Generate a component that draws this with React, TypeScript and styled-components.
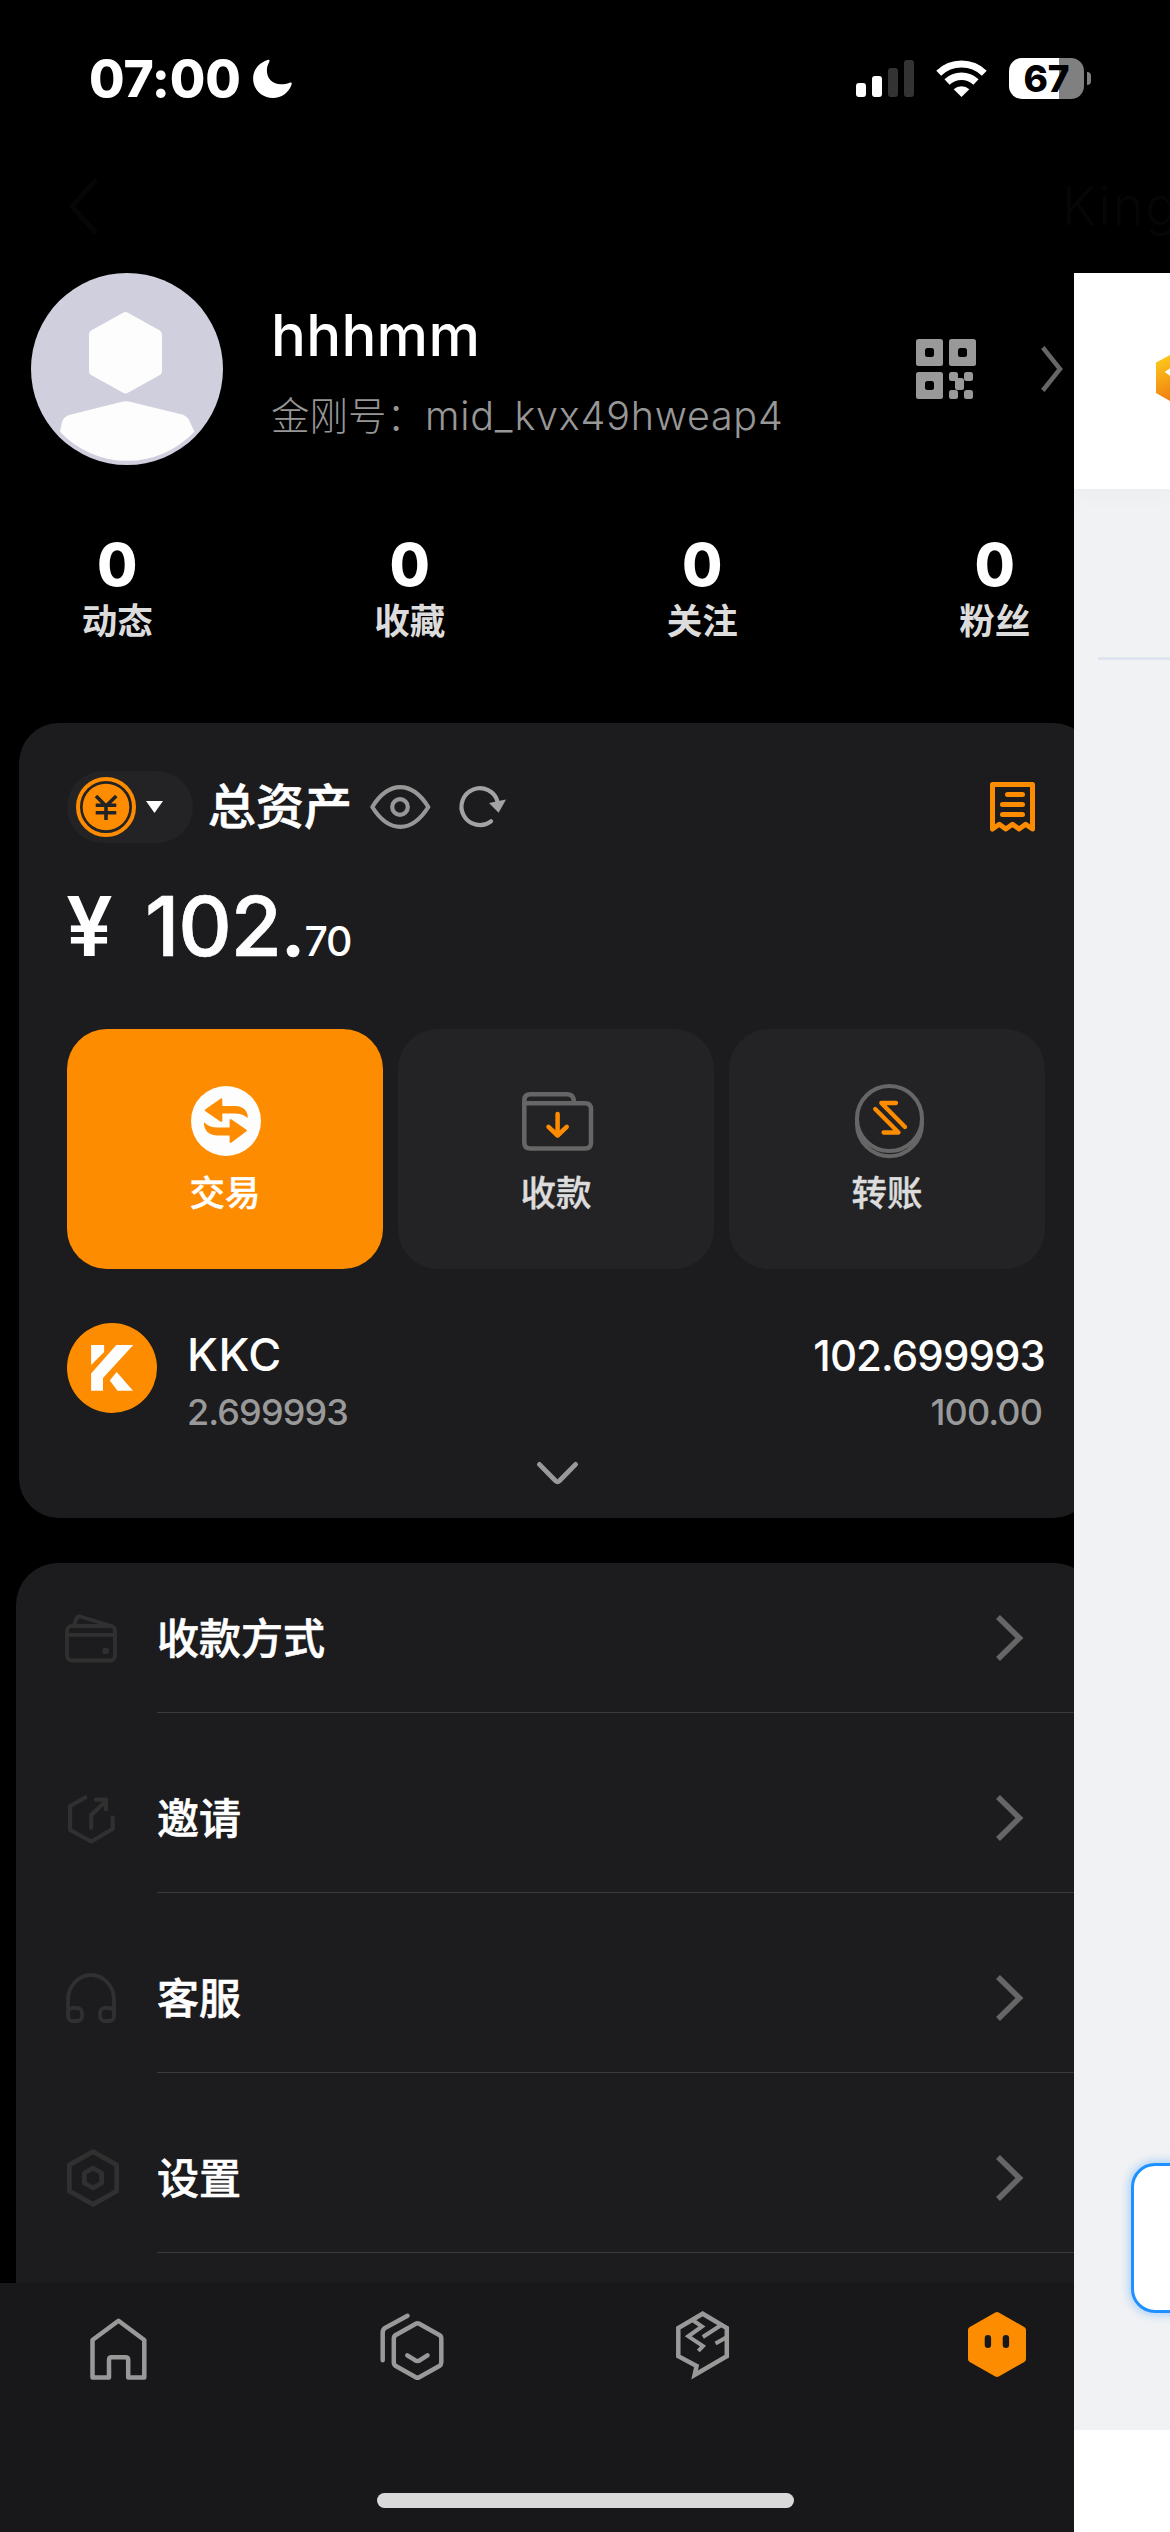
import React from "react";
import styled, { createGlobalStyle } from "styled-components";

const SANS = `Inter, "Noto Sans CJK SC", sans-serif`;
const ORANGE = "#fe8c00";
const GREY = "#999999";
const DIM = "#666666";
const FAINT = "#303031";

const Global = createGlobalStyle`
  * { box-sizing: border-box; }
  body { margin: 0; background: #000; font-family: ${SANS}; }
  svg { display: block; flex: none; overflow: visible; }
`;

const Phone = styled.div`
  position: relative;
  width: 1170px;
  height: 2532px;
  overflow: hidden;
  display: flex;
  flex-direction: column;
  background: #000;
  color: #fff;
`;

/* ---------- status bar ---------- */

const StatusBar = styled.header`
  height: 156px;
  flex: none;
  display: flex;
  align-items: center;
  padding: 0 79px 0 89px;
`;

const Clock = styled.span`
  font-size: 51.5px;
  line-height: 60px;
  font-weight: 800;
  width: 164px;
  letter-spacing: -0.2px;
`;

const StatusIcons = styled.div`
  margin-left: auto;
  display: flex;
  align-items: center;
`;

const Battery = styled.div`
  width: 75px;
  height: 41px;
  margin-left: 22px;
  border-radius: 13px;
  background: linear-gradient(90deg, #fff 50px, #808080 50px);
  color: #000;
  font-size: 37px;
  line-height: 41px;
  font-weight: 800;
  text-align: center;
`;

const BatteryCap = styled.div`
  width: 4px;
  height: 13px;
  margin-left: 3px;
  border-radius: 0 4px 4px 0;
  background: #808080;
`;

const GhostNav = styled.nav`
  height: 117px;
  flex: none;
  display: flex;
  align-items: center;
  justify-content: space-between;
  padding: 0 0 17px 69px;
`;

const GhostTitle = styled.span`
  width: 108px;
  font-size: 53px;
  line-height: 64px;
  font-weight: 300;
  letter-spacing: 1.5px;
  color: #060606;
  white-space: nowrap;
`;

/* ---------- layout ---------- */

const Body = styled.div`
  flex: 1;
  min-height: 0;
  display: flex;
`;

const Viewport = styled.main`
  width: 1074px;
  flex: none;
  overflow: hidden;
`;

const Page = styled.div`
  width: 1170px;
  height: 100%;
  margin-left: -29px;
  display: flex;
  flex-direction: column;
`;

const Profile = styled.section`
  height: 192px;
  flex: none;
  display: flex;
  align-items: center;
  padding: 0 78px 0 60px;
`;

const ProfileText = styled.div`
  margin-left: 48px;
  padding-top: 2px;
  flex: 1;
  display: flex;
  flex-direction: column;
  gap: 21px;
`;

const Name = styled.span`
  font-size: 58px;
  line-height: 70px;
  font-weight: 500;
  letter-spacing: 0.3px;
`;

const UserId = styled.span`
  font-size: 38.5px;
  line-height: 50px;
  font-weight: 300;
  color: #979797;
  white-space: nowrap;
`;

const Handle = styled.span`
  font-size: 39.5px;
  line-height: 40px;
  letter-spacing: 0.75px;
`;

const ProfileActions = styled.div`
  display: flex;
  align-items: center;
  gap: 65px;
`;

const Stats = styled.section`
  flex: none;
  display: grid;
  grid-template-columns: repeat(4, 1fr);
  margin-top: 70px;
`;

const Stat = styled.div`
  display: flex;
  flex-direction: column;
  align-items: center;
  gap: 7px;
`;

const StatValue = styled.span`
  font-size: 58.5px;
  line-height: 60px;
  font-weight: 800;
`;

const StatLabel = styled.span`
  font-size: 35.5px;
  line-height: 40px;
  font-weight: 700;
  color: #dcdcdc;
`;

/* ---------- assets card ---------- */

const Card = styled.section`
  flex: none;
  height: 795px;
  margin: 81px 48px 0;
  padding: 48px;
  border-radius: 40px;
  background: #1c1c1e;
`;

const CardHeader = styled.div`
  height: 72px;
  display: flex;
  align-items: center;
`;

const Currency = styled.button`
  width: 126px;
  height: 72px;
  padding: 0 0 0 9px;
  border: 0;
  border-radius: 36px;
  background: #232325;
  display: flex;
  align-items: center;
  gap: 10px;
`;

const CardTitle = styled.h2`
  width: 146px;
  margin: 0 16px 0 15px;
  font-size: 48px;
  line-height: 60px;
  font-weight: 500;
  white-space: nowrap;
  -webkit-text-stroke: 0.7px currentColor;
`;

const HeaderIcons = styled.div`
  flex: 1;
  display: flex;
  align-items: center;
  gap: 28px;
  padding-right: 10px;

  svg:last-child {
    margin-left: auto;
  }
`;

const Amount = styled.div`
  margin-top: 38px;
  height: 90px;
  display: flex;
  align-items: baseline;
  font-size: 83px;
  line-height: 90px;
  font-weight: 500;
  white-space: nowrap;
`;

const Yen = styled.span`
  width: 79px;
  margin-left: -1px;
  line-height: 80px;
  font-weight: 600;
`;

const Whole = styled.span`
  letter-spacing: -1.2px;
  -webkit-text-stroke: 0.7px currentColor;
`;

const Cents = styled.span`
  font-size: 41px;
  line-height: 50px;
  letter-spacing: -1.3px;
`;

const Actions = styled.div`
  margin-top: 58px;
  display: grid;
  grid-template-columns: repeat(3, 1fr);
  gap: 15px;
`;

const Action = styled.button<{ $primary?: boolean }>`
  height: 240px;
  padding: 0;
  border: 0;
  border-radius: 40px;
  background: ${(p) => (p.$primary ? ORANGE : "#232325")};
  color: ${(p) => (p.$primary ? "#fff" : "#dcdcdc")};
  font-family: inherit;
  font-size: 35.5px;
  line-height: 40px;
  font-weight: 500;
  -webkit-text-stroke: 0.4px currentColor;
  display: flex;
  flex-direction: column;
  align-items: center;
  justify-content: center;
  gap: 16px;
`;

const ActionIcon = styled.span<{ $nudge: number }>`
  height: 74px;
  display: flex;
  align-items: center;
  padding-left: ${(p) => p.$nudge}px;
`;

const Asset = styled.div`
  margin-top: 54px;
  height: 108px;
  display: flex;
  align-items: flex-start;
`;

const AssetText = styled.div<{ $end?: boolean }>`
  padding-top: 7px;
  margin-left: ${(p) => (p.$end ? "auto" : "30px")};
  display: flex;
  flex-direction: column;
  align-items: ${(p) => (p.$end ? "flex-end" : "flex-start")};
  gap: 14px;
`;

const Ticker = styled.span`
  font-size: 45px;
  line-height: 50px;
  font-weight: 500;
  letter-spacing: 0.5px;
`;

const Total = styled.span`
  font-size: 42px;
  line-height: 52px;
  margin-bottom: -2px;
  font-weight: 500;
  letter-spacing: -0.9px;
`;

const AssetSub = styled.span<{ $inset?: boolean }>`
  font-size: 36px;
  line-height: 36px;
  font-weight: 500;
  letter-spacing: -0.9px;
  color: ${GREY};
  padding-right: ${(p) => (p.$inset ? "3px" : "0")};
`;

const Expand = styled.div`
  margin-top: 31px;
  padding-left: 2px;
  display: flex;
  justify-content: center;
`;

/* ---------- menu ---------- */

const Menu = styled.section`
  flex: 1;
  min-height: 0;
  overflow: hidden;
  margin: 45px 45px 0;
  border-radius: 42px 42px 0 0;
  background: #1c1c1e;
  display: flex;
  flex-direction: column;
  gap: 30px;
`;

const MenuRow = styled.div`
  height: 150px;
  flex: none;
  display: flex;
`;

const MenuIcon = styled.span<{ $inset: number; $drop: number }>`
  width: 141px;
  display: flex;
  align-items: center;
  padding: ${(p) => p.$drop}px 0 0 ${(p) => p.$inset}px;
`;

const MenuMain = styled.div`
  flex: 1;
  display: flex;
  align-items: center;
  justify-content: space-between;
  padding: 0 72px 0 0;
  border-bottom: 1px solid #3a3a3c;
`;

const MenuLabel = styled.span`
  padding-top: 3px;
  font-size: 42px;
  line-height: 50px;
  font-weight: 500;
  -webkit-text-stroke: 0.6px currentColor;
`;

/* ---------- tab bar ---------- */

const TabBar = styled.nav`
  height: 249px;
  flex: none;
  display: grid;
  grid-template-columns: repeat(4, 1fr);
  align-items: start;
  background: #18181a;
`;

const Tab = styled.div<{ $shift: number; $top: number }>`
  display: flex;
  justify-content: center;
  padding: ${(p) => p.$top}px 0 0 ${(p) => p.$shift}px;
`;

const HomeIndicator = styled.div`
  position: absolute;
  left: 377px;
  top: 2493px;
  width: 417px;
  height: 15px;
  border-radius: 8px;
  background: #d9d9d9;
`;

/* ---------- incoming screen ---------- */

const Side = styled.aside`
  flex: 1;
  min-width: 0;
  overflow: hidden;
  display: flex;
  flex-direction: column;
  background: #fff;
`;

const SideHeader = styled.div`
  position: relative;
  height: 216px;
  flex: none;
  padding: 82px 0 0 82px;
  background: #fff;
  box-shadow: 0 4px 24px rgba(0, 0, 0, 0.03);
`;

const SideBody = styled.div`
  height: 1941px;
  flex: none;
  padding-top: 168px;
  background: #f1f2f4;
`;

const SideRule = styled.div`
  height: 3px;
  margin-left: 24px;
  background: #dfe5ef;
`;

const SideInput = styled.div`
  width: 300px;
  height: 150px;
  margin: 1503px 0 0 57px;
  border: 3px solid #1e90ff;
  border-radius: 24px;
  background: #fff;
  box-shadow: 0 0 10px 2px rgba(30, 144, 255, 0.35);
`;

/* ---------- icons ---------- */

type IconProps = {
  w: number;
  h: number;
  color?: string;
  sw?: number;
  children: React.ReactNode;
};

const Icon = ({ w, h, color = GREY, sw = 4.5, children }: IconProps) => (
  <svg
    width={w}
    height={h}
    viewBox={`0 0 ${w} ${h}`}
    fill="none"
    stroke={color}
    strokeWidth={sw}
    strokeLinecap="round"
    strokeLinejoin="round"
  >
    {children}
  </svg>
);

const WifiSvg = styled.svg`
  margin-left: 22px;
`;

const MoonIcon = () => (
  <svg width="39" height="39" viewBox="0 0 39 39" fill="#fff">
    <path d="M14.500.9C16.300.2 17 1.300 16.200 3 14.500 6 13.900 8.500 13.900 11.500c0 8.300 5.800 13.800 14.100 13.800 3 0 6-.5 8.500-1.500 1.800-.7 2.700.4 2 2C35.500 34 28.500 39 20 39 8.800 39 .1 30.500.1 19.500.1 11 5.500 4 14.500.9Z" />
  </svg>
);

const SignalIcon = () => (
  <svg width="58" height="37" viewBox="0 0 58 37">
    <rect x="0" y="23" width="10" height="14" rx="3" fill="#fff" />
    <rect x="16" y="16" width="10" height="21" rx="3" fill="#fff" />
    <rect x="32" y="8" width="10" height="29" rx="3" fill="#333" />
    <rect x="48" y="0" width="10" height="37" rx="3" fill="#333" />
  </svg>
);

const WifiIcon = () => (
  <WifiSvg width="51" height="37" viewBox="0 0 51 37" fill="none" stroke="#fff">
    <path d="M2.700 13.200A33 33 0 0 1 48.300 13.200" strokeWidth="7" />
    <path d="M11 22A21.200 21.200 0 0 1 40 22" strokeWidth="7.500" />
    <path d="M25.500 37 17.700 29.300A11.500 11.500 0 0 1 33.300 29.300Z" fill="#fff" stroke="none" />
  </WifiSvg>
);

const AvatarIcon = () => (
  <svg width="192" height="192" viewBox="0 0 192 192">
    <circle cx="96" cy="96" r="96" fill="#d0cfdd" />
    <path
      d="M94.500 44 126 61.500V98L94.500 115.500 63 98V61.500Z"
      fill="#fdfdfd"
      stroke="#fdfdfd"
      strokeWidth="10"
      strokeLinejoin="round"
    />
    <path
      d="M90 129Q95 127.500 100 129L151 141.500Q156.500 143 158.500 148L163.400 158.700A92 92 0 0 1 29 158.700L31 149Q32.500 144 38 142Z"
      fill="#fdfdfd"
    />
  </svg>
);

const QrIcon = () => (
  <svg width="60" height="60" viewBox="0 0 60 60" fill={GREY}>
    {[[0, 0], [33, 0], [0, 33]].map(([x, y]) => (
      <g key={`${x}-${y}`}>
        <rect x={x} y={y} width="27" height="27" rx="2.500" />
        <rect x={x + 9} y={y + 9} width="9" height="9" rx="2.500" fill="#000" />
      </g>
    ))}
    <rect x="33" y="33" width="9" height="9" rx="2.500" />
    <rect x="48" y="33" width="9" height="9" rx="2.500" />
    <rect x="39" y="39" width="9" height="12" rx="2.500" />
    <rect x="33" y="51" width="9" height="9" rx="2.500" />
    <rect x="48" y="51" width="9" height="9" rx="2.500" />
  </svg>
);

const ThinChevron = () => (
  <svg width="22" height="46" viewBox="0 0 22 46" fill="none" stroke={DIM} strokeWidth="4.500">
    <path d="M1.800 1.500 19 23 1.800 44.500" />
  </svg>
);

const MenuChevron = () => (
  <svg width="28" height="46" viewBox="0 0 28 46" fill="none" stroke={DIM} strokeWidth="5.600">
    <path d="M2 2 23.400 23 2 44" />
  </svg>
);

const CoinIcon = () => (
  <svg width="60" height="60" viewBox="0 0 60 60" fill="none">
    <circle cx="30" cy="30" r="28" stroke={ORANGE} strokeWidth="4" />
    <circle cx="30" cy="30" r="23.300" fill={ORANGE} />
    <path d="M20 19 30 29 40.300 19M19.700 28.300H40.300M19.700 35.800H40.300M30 28.300V43" stroke="#232325" strokeWidth="3.600" />
  </svg>
);

const CaretIcon = () => (
  <svg width="17" height="12" viewBox="0 0 17 12" fill="#fff">
    <path d="M0 0H17L8.500 12Z" />
  </svg>
);

const EyeIcon = () => (
  <Icon w={61} h={44} color="#979797" sw={4.2}>
    <path d="M2.300 22C11 8 20.500 2.200 30.300 2.200S49.500 8 58.300 22C49.500 36 40 41.800 30.300 41.800S11 36 2.300 22Z" />
    <circle cx="30" cy="22" r="7.800" />
  </Icon>
);

const RefreshIcon = () => (
  <Icon w={47} h={42} color="#a3a3a3" sw={4.2}>
    <path d="M38.700 16A18.400 18.400 0 1 0 32 35.300" />
    <path d="M30 17 47 13.500 39.600 26.700Z" fill="#a3a3a3" stroke="none" />
  </Icon>
);

const ReceiptIcon = () => (
  <Icon w={45} h={50} color={ORANGE} sw={5}>
    <path d="M2.500 2.500H42.500V47L35.600 42.300 29.100 47 22.500 42.300 15.800 47 9.300 42.300 2.500 47Z" />
    <path d="M17.500 12.500H32.500M12.500 22.500H32.500M12.500 32.500H32.500" />
  </Icon>
);

const TradeIcon = () => (
  <svg width="70" height="70" viewBox="0 0 70 70">
    <circle cx="35" cy="35" r="35" fill="#fdfdfd" />
    <path
      d="M14.100 23.500 29.500 12.800Q31.300 11.500 31.300 14V20H44Q56.500 20.500 56.900 32 51 27.600 44 27.600H31.300V34Q31.300 36.700 29.300 35.600L14.100 25Q13.400 24.300 14.100 23.500Z"
      fill={ORANGE}
    />
    <path
      d="M55.500 45.200 40.500 56.600Q38.600 57.600 38.600 55.500V49.400H25.500Q13 48.500 12.900 36.300 18.500 41.500 26.500 41.500H38.600V35Q38.600 32.300 40.600 33.400L55.500 43.800Q56.300 44.500 55.500 45.200Z"
      fill={ORANGE}
    />
  </svg>
);

const ReceiveIcon = () => (
  <Icon w={71} h={59} color={DIM}>
    <path d="M2.300 11.500V8.500Q2.300 2.300 8.500 2.300H45.500Q52 2.500 52 10.500" />
    <path d="M2.300 11.300H63Q69 11.300 69 17.300V50.500Q69 56.500 63 56.500H8.300Q2.300 56.500 2.300 50.500Z" />
    <path d="M35.600 22V43.500M26.500 34.800 35.600 43.500 44.700 34.800" stroke={ORANGE} />
  </Icon>
);

const TransferIcon = () => (
  <Icon w={69} h={73} color={DIM} sw={4}>
    <circle cx="34.500" cy="33.500" r="32.500" />
    <path d="M2 34V38.700A32.500 32.500 0 0 0 67 38.700V34" />
    <path d="M41 18H26.300L50 42M20.200 24 43.500 47.500H28.600" stroke={ORANGE} strokeWidth="4.300" />
  </Icon>
);

const LogoIcon = () => (
  <svg width="90" height="90" viewBox="0 0 90 90">
    <circle cx="45" cy="45" r="45" fill={ORANGE} />
    <g fill="#fdfdfd">
      <path d="M24.100 22H37.100V29L24.100 42Z" />
      <path d="M49.300 22H66.300L36 55.100V67.800H24.100V50.600Z" />
      <path d="M49.700 48.900 66 67.800H50.500L42.800 57.500Z" />
    </g>
  </svg>
);

const DownIcon = () => (
  <Icon w={41} h={23} color={GREY} sw={4.8}>
    <path d="M2.400 2.400 18.500 18.800Q20.500 20.600 22.500 18.800L38.600 2.400" />
  </Icon>
);

const WalletIcon = () => (
  <Icon w={52} h={49} color={FAINT} sw={3.8}>
    <rect x="2" y="12" width="48" height="34.500" rx="5" />
    <path d="M2 20.800H50M9 11.500 11 5.500Q12.500 1.500 16 2.800L46.500 12" />
    <circle cx="40.700" cy="37" r="3.300" fill={FAINT} stroke="none" />
  </Icon>
);

const InviteIcon = () => (
  <Icon w={47} h={49} color={FAINT} sw={4.2}>
    <path d="M17.300 2.500 2.100 11V35L23.200 46.500 44.700 34V22.500" />
    <path d="M23.200 33V20L38 6M28 4.600H38V14.500" />
  </Icon>
);

const SupportIcon = () => (
  <Icon w={50} h={50} color={FAINT} sw={3.8}>
    <path d="M2 42V27A23 25 0 0 1 48 27V42" />
    <rect x="2" y="35" width="14" height="13" rx="5" />
    <rect x="34" y="35" width="14" height="13" rx="5" />
  </Icon>
);

const SettingsIcon = () => (
  <Icon w={52} h={58} color={FAINT} sw={4.8}>
    <path d="M26 2.600 49.600 15.800V42.200L26 55.400 2.400 42.200V15.800Z" />
    <path d="M26 19 34.600 24V34L26 39 17.400 34V24Z" />
  </Icon>
);

const HomeIcon = () => (
  <Icon w={57} h={62}>
    <path d="M28.500 2.800 54.300 22V59.500H38.200V42Q38.200 39.300 35.500 39.300H21.500Q19 39.300 19 42V59.500H2.500V22Z" />
  </Icon>
);

const CommunityIcon = () => (
  <Icon w={64} h={67}>
    <path d="M27.500 2.800 5 15Q2.700 16.500 2.700 19.500V47.300" />
    <path d="M35.800 10.700Q37.500 9.700 39.200 10.700L59.300 22Q61.300 23.300 61.300 25.500V49.500Q61.300 51.700 59.300 53L39.200 64.200Q37.500 65.200 35.800 64.200L15.800 53Q13.800 51.700 13.800 49.500V25.500Q13.800 23.300 15.800 22Z" />
    <path d="M27.300 42.300 35 47.200Q37.500 48.700 40 47.200L47.500 42.300" />
  </Icon>
);

const ChatIcon = () => (
  <svg width="53" height="68" viewBox="0 0 53 68" fill="none" stroke={GREY} strokeWidth="4.500">
    <path d="M26.700 2.700 50.800 17V45.200L18.600 64 20.600 55 2.300 45.200V17Z" />
    <path d="M16.500 9 26 15.500 12.300 25.300 27 35 22.300 40" strokeWidth="4" />
    <path d="M44.500 14.500 26.800 26M51 26 39.500 32.500" strokeWidth="4" />
  </svg>
);

const MeIcon = () => (
  <svg width="58" height="65" viewBox="0 0 58 65">
    <path
      d="M29 3.500 54.500 18V47L29 61.500 3.500 47V18Z"
      fill={ORANGE}
      stroke={ORANGE}
      strokeWidth="7"
      strokeLinejoin="round"
    />
    <rect x="16.700" y="23" width="6.400" height="13" rx="3.200" fill="#18181a" />
    <rect x="34.700" y="23" width="6.400" height="13" rx="3.200" fill="#18181a" />
  </svg>
);

const GoldIcon = () => (
  <svg width="40" height="46" viewBox="0 0 40 46">
    <defs>
      <linearGradient id="gold" gradientUnits="userSpaceOnUse" x1="0" y1="5" x2="16" y2="44">
        <stop offset="0" stopColor="#fdc81a" />
        <stop offset="1" stopColor="#f07f12" />
      </linearGradient>
    </defs>
    <path d="M14 0H40V46H14L0 38V7.500Z" fill="url(#gold)" />
    <path d="M8.700 17 16 12V22Z" fill="#fff" />
  </svg>
);

/* ---------- data ---------- */

const stats = [
  { value: "0", label: "动态" },
  { value: "0", label: "收藏" },
  { value: "0", label: "关注" },
  { value: "0", label: "粉丝" },
];

const actions = [
  { label: "交易", icon: <TradeIcon />, primary: true, nudge: 2 },
  { label: "收款", icon: <ReceiveIcon />, primary: false, nudge: 2 },
  { label: "转账", icon: <TransferIcon />, primary: false, nudge: 4 },
];

const menu = [
  { label: "收款方式", icon: <WalletIcon />, inset: 49, drop: 0 },
  { label: "邀请", icon: <InviteIcon />, inset: 52, drop: 3 },
  { label: "客服", icon: <SupportIcon />, inset: 50, drop: 0 },
  { label: "设置", icon: <SettingsIcon />, inset: 51, drop: 0 },
];

const tabs = [
  { id: "home", icon: <HomeIcon />, top: 35, shift: 2 },
  { id: "community", icon: <CommunityIcon />, top: 30, shift: 4 },
  { id: "chat", icon: <ChatIcon />, top: 28, shift: 0 },
  { id: "me", icon: <MeIcon />, top: 29, shift: 5 },
];

export default function App() {
  return (
    <Phone>
      <Global />
      <StatusBar>
        <Clock>07:00</Clock>
        <MoonIcon />
        <StatusIcons>
          <SignalIcon />
          <WifiIcon />
          <Battery>67</Battery>
          <BatteryCap />
        </StatusIcons>
      </StatusBar>
      <GhostNav>
        <svg width="29" height="57" viewBox="0 0 29 57" fill="none" stroke="#060606" strokeWidth="5">
          <path d="M27.500 1.500 3 28.500 27.500 55.500" />
        </svg>
        <GhostTitle>King</GhostTitle>
      </GhostNav>

      <Body>
        <Viewport>
          <Page>
            <Profile>
              <AvatarIcon />
              <ProfileText>
                <Name>hhhmm</Name>
                <UserId>
                  金刚号：<Handle>mid_kvx49hweap4</Handle>
                </UserId>
              </ProfileText>
              <ProfileActions>
                <QrIcon />
                <ThinChevron />
              </ProfileActions>
            </Profile>

            <Stats>
              {stats.map((s) => (
                <Stat key={s.label}>
                  <StatValue>{s.value}</StatValue>
                  <StatLabel>{s.label}</StatLabel>
                </Stat>
              ))}
            </Stats>

            <Card>
              <CardHeader>
                <Currency>
                  <CoinIcon />
                  <CaretIcon />
                </Currency>
                <CardTitle>总资产</CardTitle>
                <HeaderIcons>
                  <EyeIcon />
                  <RefreshIcon />
                  <ReceiptIcon />
                </HeaderIcons>
              </CardHeader>
              <Amount>
                <Yen>¥</Yen>
                <Whole>102.</Whole>
                <Cents>70</Cents>
              </Amount>
              <Actions>
                {actions.map((a) => (
                  <Action key={a.label} $primary={a.primary}>
                    <ActionIcon $nudge={a.nudge}>{a.icon}</ActionIcon>
                    {a.label}
                  </Action>
                ))}
              </Actions>
              <Asset>
                <LogoIcon />
                <AssetText>
                  <Ticker>KKC</Ticker>
                  <AssetSub>2.699993</AssetSub>
                </AssetText>
                <AssetText $end>
                  <Total>102.699993</Total>
                  <AssetSub $inset>100.00</AssetSub>
                </AssetText>
              </Asset>
              <Expand>
                <DownIcon />
              </Expand>
            </Card>

            <Menu>
              {menu.map((m) => (
                <MenuRow key={m.label}>
                  <MenuIcon $inset={m.inset} $drop={m.drop}>{m.icon}</MenuIcon>
                  <MenuMain>
                    <MenuLabel>{m.label}</MenuLabel>
                    <MenuChevron />
                  </MenuMain>
                </MenuRow>
              ))}
            </Menu>

            <TabBar>
              {tabs.map((t) => (
                <Tab key={t.id} $shift={t.shift} $top={t.top}>
                  {t.icon}
                </Tab>
              ))}
            </TabBar>
          </Page>
        </Viewport>

        <Side>
          <SideHeader>
            <GoldIcon />
          </SideHeader>
          <SideBody>
            <SideRule />
            <SideInput />
          </SideBody>
        </Side>
      </Body>
      <HomeIndicator />
    </Phone>
  );
}
